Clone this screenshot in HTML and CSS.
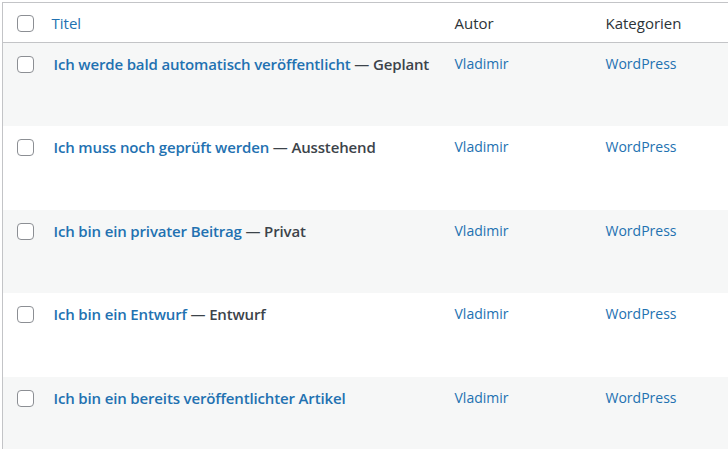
FILE: index.html
```html
<!DOCTYPE html>
<html>
<head>
  <meta charset="utf-8">
  <meta name="viewport" content="width=device-width">
  <title>Beiträge</title>
  <link rel="stylesheet" href="styles.css">
</head>
<body>

  <table class="posts">
    <thead>
      <tr>
        <th class="check"><span class="box"></span></th>
        <th class="col-title"><a href="#">Titel</a></th>
        <th class="col-author">Autor</th>
        <th class="col-cat">Kategorien</th>
      </tr>
    </thead>
    <tbody>
      <tr>
        <td class="check"><span class="box"></span></td>
        <td class="col-title"><a href="#">Ich werde bald automatisch veröffentlicht</a> — <span class="state">Geplant</span></td>
        <td class="col-author"><a href="#">Vladimir</a></td>
        <td class="col-cat"><a href="#">WordPress</a></td>
      </tr>
      <tr>
        <td class="check"><span class="box"></span></td>
        <td class="col-title"><a href="#">Ich muss noch geprüft werden</a> — <span class="state">Ausstehend</span></td>
        <td class="col-author"><a href="#">Vladimir</a></td>
        <td class="col-cat"><a href="#">WordPress</a></td>
      </tr>
      <tr>
        <td class="check"><span class="box"></span></td>
        <td class="col-title"><a href="#">Ich bin ein privater Beitrag</a> — <span class="state">Privat</span></td>
        <td class="col-author"><a href="#">Vladimir</a></td>
        <td class="col-cat"><a href="#">WordPress</a></td>
      </tr>
      <tr>
        <td class="check"><span class="box"></span></td>
        <td class="col-title"><a href="#">Ich bin ein Entwurf</a> — <span class="state">Entwurf</span></td>
        <td class="col-author"><a href="#">Vladimir</a></td>
        <td class="col-cat"><a href="#">WordPress</a></td>
      </tr>
      <tr>
        <td class="check"><span class="box"></span></td>
        <td class="col-title"><a href="#">Ich bin ein bereits veröffentlichter Artikel</a></td>
        <td class="col-author"><a href="#">Vladimir</a></td>
        <td class="col-cat"><a href="#">WordPress</a></td>
      </tr>
    </tbody>
  </table>

</body>
</html>
```

FILE: styles.css
```css
body {
  margin: 0;
  padding: 2px 0 0 2px;
  overflow: hidden;
  background: #fff;
  font-family: "Open Sans", sans-serif;
  font-size: 14px;
  color: #3c434a;
}
a {
  color: #2271b1;
  text-decoration: none;
}
.posts {
  width: 760px;
  border-collapse: collapse;
  border-top: 1px solid #c3c4c7;
  border-left: 1px solid #c3c4c7;
  table-layout: fixed;
}
.posts th, .posts td {
  box-sizing: border-box;
  text-align: left;
  vertical-align: top;
  padding: 0;
}
.posts thead tr {
  height: 40px;
  border-bottom: 1px solid #c3c4c7;
}
.posts th {
  font-weight: 400;
  font-size: 15px;
  line-height: 22px;
  color: #2c3338;
  padding-top: 9px;
}
.posts tbody tr {
  height: 83.5px;
}
.posts tbody tr:nth-child(odd) {
  background: #f6f7f7;
}
.posts td {
  padding-top: 10px;
  line-height: 22px;
}
.posts .check {
  width: 41px;
}
.posts .col-title {
  width: 401px;
}
.posts .col-author {
  width: 151px;
}
.posts th.col-title {
  padding-left: 8px;
}
.posts td.col-title {
  padding-left: 10px;
  font-size: 15px;
  font-weight: 600;
  letter-spacing: -0.15px;
  color: #3c434a;
}
.posts .col-author, .posts .col-cat {
  padding-left: 10px;
}
.posts th.check {
  padding: 12px 0 0 14px;
}
.posts td.check {
  padding: 13px 0 0 14px;
}
.box {
  display: block;
  box-sizing: border-box;
  width: 17px;
  height: 17px;
  border: 1px solid #8c8f94;
  border-radius: 4px;
  background: #fff;
}
```
